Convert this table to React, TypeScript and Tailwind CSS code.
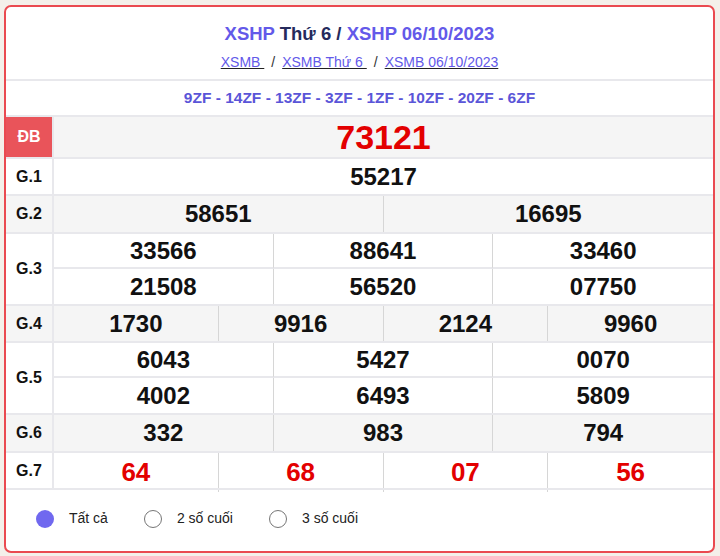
import React from 'react';

const font = { fontFamily: '"Liberation Sans", Arial, sans-serif' };

type Row = { label: string; values: string[]; cols: number; gray: boolean; h: string; red?: boolean };

const rows: Row[] = [
  { label: 'G.1', values: ['55217'], cols: 1, gray: false, h: 'h-[37px]' },
  { label: 'G.2', values: ['58651', '16695'], cols: 2, gray: true, h: 'h-[38px]' },
  { label: 'G.3', values: ['33566', '88641', '33460', '21508', '56520', '07750'], cols: 3, gray: false, h: 'h-[72px]' },
  { label: 'G.4', values: ['1730', '9916', '2124', '9960'], cols: 4, gray: true, h: 'h-[37px]' },
  { label: 'G.5', values: ['6043', '5427', '0070', '4002', '6493', '5809'], cols: 3, gray: false, h: 'h-[72px]' },
  { label: 'G.6', values: ['332', '983', '794'], cols: 3, gray: true, h: 'h-[38px]' },
  { label: 'G.7', values: ['64', '68', '07', '56'], cols: 4, gray: false, h: 'h-[37px]', red: true },
];

const gridCols: Record<number, string> = {
  1: 'grid-cols-1',
  2: 'grid-cols-2',
  3: 'grid-cols-3',
  4: 'grid-cols-4',
};

const PrizeRow: React.FC<{ row: Row }> = ({ row }) => {
  const twoLines = row.values.length > row.cols;
  return (
    <div className={`flex border-t-2 border-[#e8e8ec] ${row.h} ${row.gray ? 'bg-[#f5f5f5]' : 'bg-white'}`}>
      <div className="w-[48px] shrink-0 border-r-2 border-[#e8e8ec] flex items-center justify-center text-[16px] font-bold text-[#111]">
        {row.label}
      </div>
      <div className={`flex-1 grid ${gridCols[row.cols]} ${twoLines ? 'grid-rows-2' : ''}`}>
        {row.values.map((v, i) => {
          const lastCol = (i + 1) % row.cols === 0;
          const firstLine = twoLines && i < row.cols;
          return (
            <div
              key={i}
              className={`flex items-center justify-center font-bold ${
                row.red ? 'text-[26px] text-[#e30000]' : 'text-[24px] text-[#111]'
              } ${lastCol ? '' : 'border-r border-[#d6d6d6]'} ${firstLine ? 'border-b-2 border-b-[#e8e8ec]' : ''}`}
            >
              {v}
            </div>
          );
        })}
      </div>
    </div>
  );
};

const Radio: React.FC<{ checked?: boolean; label: string }> = ({ checked, label }) => (
  <label className="flex items-center gap-[15px]">
    {checked ? (
      <span className="w-[18px] h-[18px] rounded-full bg-[#7068ef]" />
    ) : (
      <span className="w-[18px] h-[18px] rounded-full border border-[#767676] bg-white" />
    )}
    <span className="text-[14px] text-[#222]">{label}</span>
  </label>
);

export default function App() {
  return (
    <div className="w-[720px] h-[556px] bg-[#f4f0ea] pt-[5px] pl-[4px] overflow-hidden" style={font}>
      <div className="w-[711px] h-[548px] bg-white border-2 border-[#ea4a50] rounded-[7px] overflow-hidden flex flex-col">
        {/* Header */}
        <div className="h-[72px] flex flex-col items-center pt-[15px]">
          <div className="text-[18.5px] font-bold leading-[24px]">
            <span className="text-[#6359e9]">XSHP</span>
            <span className="text-[#252a5c]"> Thứ 6 / </span>
            <span className="text-[#6359e9]">XSHP 06/10/2023</span>
          </div>
          <div className="mt-[7px] text-[14px] leading-[18px] text-[#333]">
            <a href="#" className="text-[#6359e9] underline decoration-[#222]">XSMB </a>
            <span className="mx-[7px]">/</span>
            <a href="#" className="text-[#6359e9] underline decoration-[#222]">XSMB Thứ 6 </a>
            <span className="mx-[7px]">/</span>
            <a href="#" className="text-[#6359e9] underline decoration-[#222]">XSMB 06/10/2023</a>
          </div>
        </div>

        {/* Codes */}
        <div className="h-[36px] border-t-2 border-[#e8e8ec] flex items-center justify-center text-[15.5px] font-bold text-[#5a55d8]">
          9ZF - 14ZF - 13ZF - 3ZF - 1ZF - 10ZF - 20ZF - 6ZF
        </div>

        {/* Special prize */}
        <div className="h-[42px] flex border-t-2 border-[#e8e8ec] bg-[#f5f5f5]">
          <div className="w-[48px] shrink-0 border-r-2 border-[#e8e8ec] bg-[#e9545a] flex items-center justify-center text-[16px] font-bold text-white">
            ĐB
          </div>
          <div className="flex-1 flex items-center justify-center text-[34px] font-bold text-[#e30000]">
            73121
          </div>
        </div>

        {rows.map((r) => (
          <PrizeRow key={r.label} row={r} />
        ))}

        {/* Filter */}
        <div className="flex-1 border-t-2 border-[#e8e8ec] flex items-center gap-[36px] pl-[30px] pb-[4px]">
          <Radio checked label="Tất cả" />
          <Radio label="2 số cuối" />
          <Radio label="3 số cuối" />
        </div>
      </div>
    </div>
  );
}
